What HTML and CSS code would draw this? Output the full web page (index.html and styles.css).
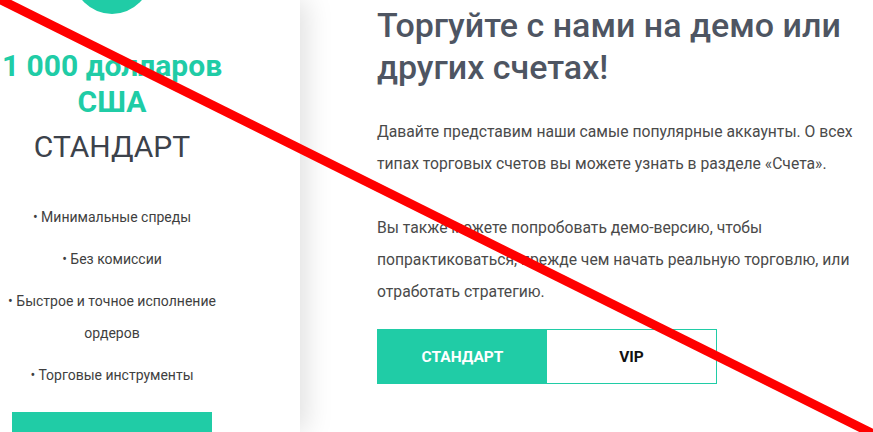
FILE: index.html
```html
<!DOCTYPE html>
<html lang="ru">
<head>
<meta charset="utf-8">
<title>Демо счета</title>
<link rel="stylesheet" href="styles.css">
</head>
<body>
<div class="page">
  <aside class="card">
    <div class="card-inner">
      <div class="badge"></div>
      <div class="price">1 000 долларов США</div>
      <div class="plan">СТАНДАРТ</div>
      <ul class="features">
        <li>• Минимальные спреды</li>
        <li>• Без комиссии</li>
        <li>• Быстрое и точное исполнение ордеров</li>
        <li>• Торговые инструменты</li>
      </ul>
      <div class="card-btn"></div>
    </div>
  </aside>
  <main class="content">
    <h1 class="title">Торгуйте с нами на демо или других счетах!</h1>
    <p class="text">Давайте представим наши самые популярные аккаунты. О всех типах торговых счетов вы можете узнать в разделе «Счета».</p>
    <p class="text second">Вы также можете попробовать демо-версию, чтобы попрактиковаться, прежде чем начать реальную торговлю, или отработать стратегию.</p>
    <div class="tabs">
      <div class="tab active">СТАНДАРТ</div>
      <div class="tab">VIP</div>
    </div>
  </main>
</div>
<svg class="strike" width="873" height="432" viewBox="0 0 873 432">
  <line x1="-2" y1="-1.6" x2="875" y2="434.8" stroke="#ff0000" stroke-width="9"/>
</svg>
</body>
</html>
```
FILE: styles.css
```css
html, body {
  margin: 0;
  padding: 0;
  background: #ffffff;
  overflow: hidden;
  width: 873px;
  height: 432px;
}
body {
  font-family: Roboto, "Noto Sans", Arial, sans-serif;
  position: relative;
}
.page {
  display: flex;
  align-items: flex-start;
  height: 432px;
  overflow: hidden;
}
.card {
  width: 300px;
  flex: none;
  height: 432px;
  overflow: hidden;
  background: #fff;
  box-shadow: 6px 0 26px rgba(0, 0, 0, 0.13);
  position: relative;
  z-index: 1;
}
.card-inner {
  width: 224px;
  padding-top: 64px;
  display: flex;
  flex-direction: column;
  align-items: center;
  text-align: center;
}
.badge {
  width: 78px;
  height: 78px;
  border-radius: 50%;
  background: #20cca6;
  margin-top: -128px;
}
.price {
  margin-top: 34px;
  font-size: 30px;
  line-height: 36px;
  font-weight: 700;
  color: #20cca6;
  width: 240px;
}
.plan {
  margin-top: 9px;
  font-size: 30px;
  line-height: 36px;
  color: #3c424b;
}
.features {
  list-style: none;
  margin: 36px 0 0;
  padding: 0;
  width: 224px;
}
.features li {
  font-size: 14px;
  line-height: 32px;
  color: #3f3f3f;
  margin-bottom: 10px;
}
.card-btn {
  margin-top: 11px;
  width: 200px;
  height: 50px;
  background: #20cca6;
}
.content {
  margin-left: 77px;
  width: 490px;
}
.title {
  margin: 4px 0 0;
  font-size: 34px;
  line-height: 42px;
  font-weight: 500;
  color: #4e5562;
}
.text {
  margin: 28px 0 0;
  font-size: 15.7px;
  line-height: 32px;
  color: #4a4a4a;
}
.text.second {
  margin-top: 32px;
}
.tabs {
  display: flex;
  margin-top: 21px;
  width: 340px;
  height: 55px;
  border: 1px solid #20cca6;
  box-sizing: border-box;
}
.tab {
  flex: 1;
  display: flex;
  align-items: center;
  justify-content: center;
  font-size: 15.5px;
  font-weight: 700;
  color: #111;
}
.tab.active {
  background: #20cca6;
  color: #fff;
}
.strike {
  position: absolute;
  left: 0;
  top: 0;
  z-index: 5;
  pointer-events: none;
}
```
